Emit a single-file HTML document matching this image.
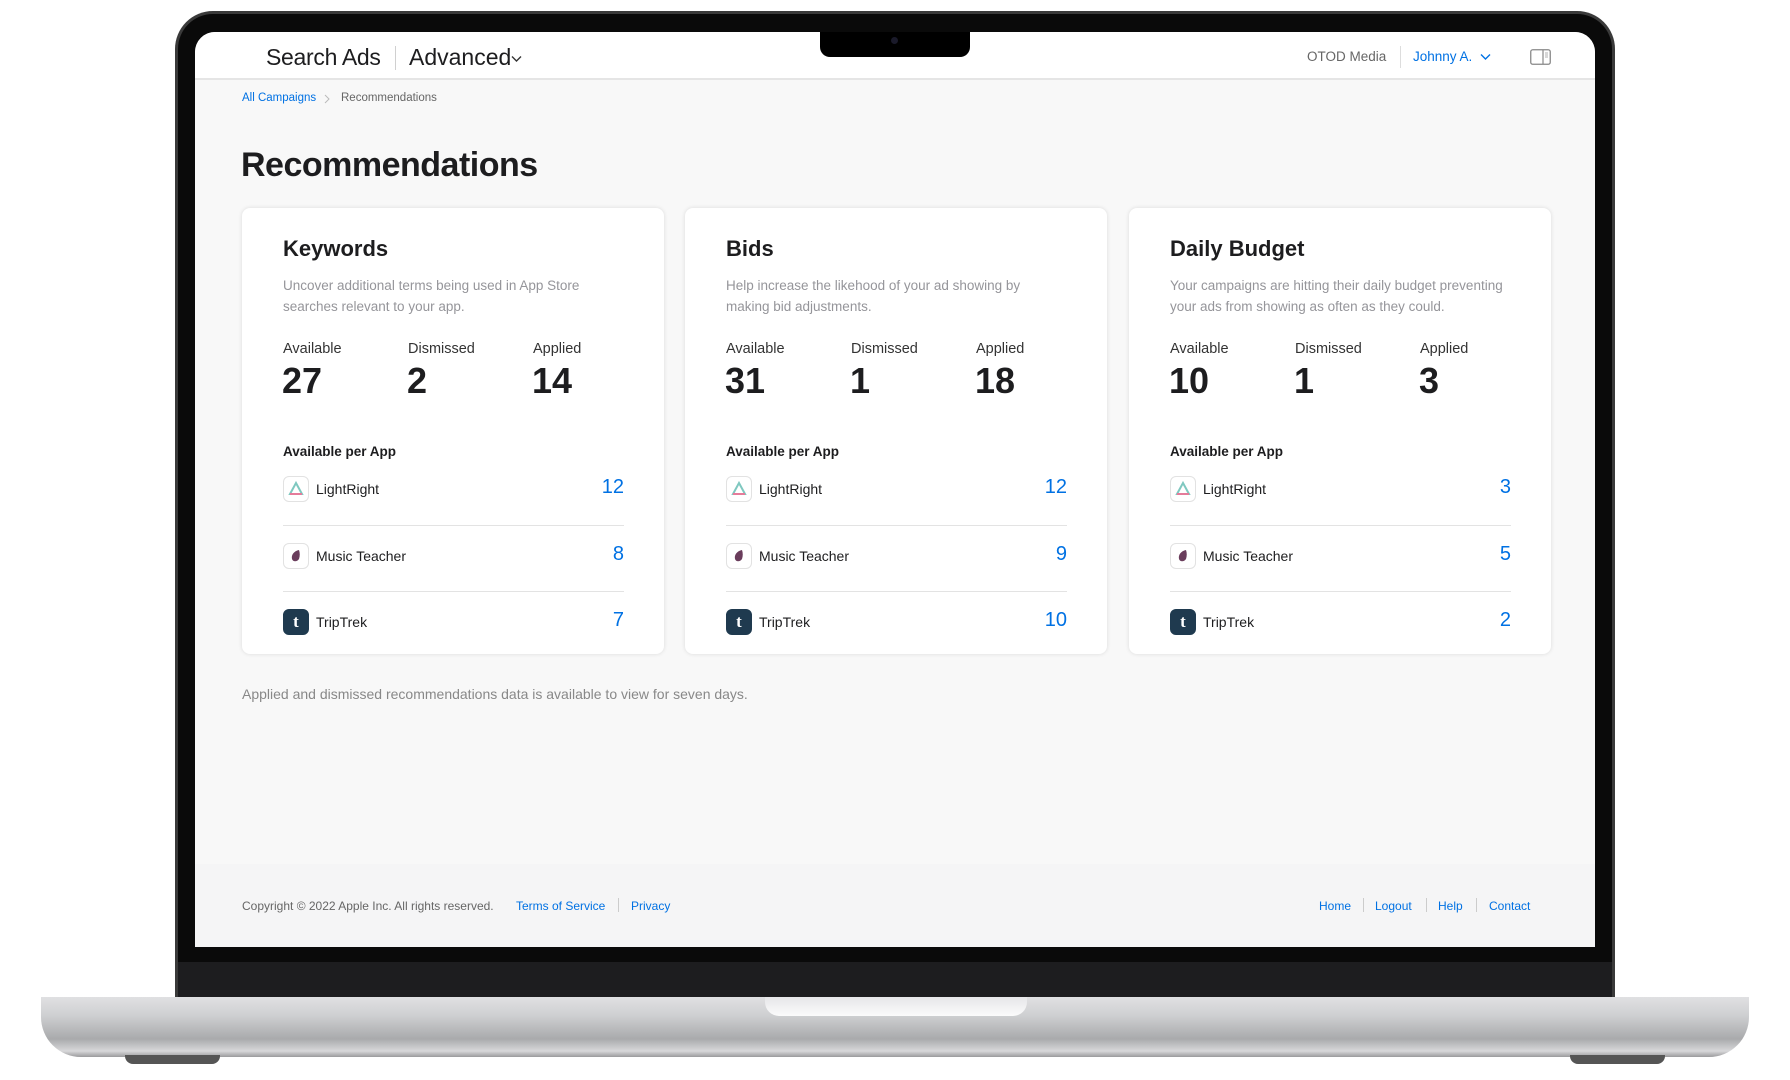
<!DOCTYPE html>
<html><head><meta charset="utf-8"><style>
*{margin:0;padding:0;box-sizing:border-box}
body{width:1790px;height:1080px;background:#fff;position:relative;overflow:hidden;font-family:"Liberation Sans",Arial,sans-serif}
.abs{position:absolute}
.lid{left:175px;top:11px;width:1440px;height:990px;background:#0a0a0a;border-radius:38px 38px 0 0;border:3px solid #3a3a3a;border-bottom:none}
.screen{left:195px;top:32px;width:1400px;height:915px;background:#f8f8f8;border-radius:20px 20px 0 0;overflow:hidden}
.chin{left:178px;top:962px;width:1434px;height:36px;background:#1d1d1f}
.base{left:41px;top:997px;width:1708px;height:60px;border-radius:0 0 40px 40px;background:linear-gradient(#e0e0e2,#cfd0d2 30%,#a9aaac 70%,#d8d8da 90%,#9a9a9c)}
.thumb{left:765px;top:997px;width:262px;height:19px;background:linear-gradient(#e6e6e8,#fbfbfb);border-radius:0 0 14px 14px}
.foot{top:1055px;width:95px;height:9px;background:#555;border-radius:0 0 8px 8px}
.notch{left:625px;top:0;width:150px;height:25px;background:#000;border-radius:0 0 10px 10px}
.hdr{left:0;top:0;width:1400px;height:48px;background:#fff;border-bottom:2px solid #e5e5e5}
.t{position:absolute;white-space:nowrap}
.card{position:absolute;top:176px;width:422px;height:446px;background:#fff;border-radius:8px;box-shadow:0 0 4px rgba(0,0,0,.12)}
.card h2{position:absolute;left:41px;top:28px;font-size:22px;font-weight:600;color:#1d1d1f}
.card .d{position:absolute;left:41px;top:67px;font-size:13.5px;line-height:21px;color:#95959a;width:340px}
.lb{position:absolute;top:133px;font-size:14.5px;color:#333}
.num{position:absolute;top:152px;font-size:36px;font-weight:600;color:#1d1d1f}
.apa{position:absolute;left:41px;top:236px;font-size:13.5px;font-weight:700;color:#1d1d1f}
.row{position:absolute;left:41px;width:341px;height:66px}
.row .ic{position:absolute;left:0;top:0;width:26px;height:26px;border-radius:6px;border:1px solid #e2e2e2;background:#fff}
.row .nm{position:absolute;left:33px;top:5px;font-size:14px;color:#1d1d1f}
.row .v{position:absolute;right:0;top:0;font-size:20px;color:#0071e3}
.sep{position:absolute;left:41px;width:341px;height:1px;background:#e3e3e3}
a{color:#0071e3;text-decoration:none}
</style></head><body>
<div class="abs lid"></div>
<div class="abs chin"></div>
<div class="abs base"></div>
<div class="abs thumb"></div>
<div class="abs foot" style="left:125px"></div>
<div class="abs foot" style="left:1570px"></div>
<div class="abs screen">
 <div class="abs hdr"></div>
 <div class="abs notch"><div class="abs" style="left:71px;top:5px;width:7px;height:7px;border-radius:50%;background:#1a1a2a"></div></div>
 <div class="t" style="left:71px;top:12px;font-size:23px;color:#1d1d1f;letter-spacing:-0.3px">Search Ads</div>
 <div class="abs" style="left:200px;top:14px;width:1px;height:24px;background:#d0d0d0"></div>
 <div class="t" style="left:214px;top:12px;font-size:23px;color:#1d1d1f;font-weight:300">Advanced</div>
 <svg class="abs" style="left:316px;top:23px" width="11" height="8"><path d="M1 1.5L5.5 6L10 1.5" stroke="#333" stroke-width="1.4" fill="none"/></svg>
 <div class="t" style="left:1112px;top:17px;font-size:13.5px;color:#666">OTOD Media</div>
 <div class="abs" style="left:1205px;top:14px;width:1px;height:22px;background:#ddd"></div>
 <div class="t" style="left:1218px;top:17px;font-size:13.5px;color:#0071e3">Johnny A.</div>
 <svg class="abs" style="left:1285px;top:21px" width="11" height="8"><path d="M1 1.5L5.5 6L10 1.5" stroke="#0071e3" stroke-width="1.4" fill="none"/></svg>
 <svg class="abs" style="left:1335px;top:17px" width="21" height="16"><rect x=".75" y=".75" width="19.5" height="14.5" rx="2" stroke="#888" stroke-width="1.3" fill="none"/><path d="M13 1v14" stroke="#888" stroke-width="1.2"/><path d="M15 4h3M15 6h3M15 8h3" stroke="#999" stroke-width=".8"/></svg>
 <div class="t" style="left:47px;top:60px;font-size:11.5px"><a>All Campaigns</a></div>
 <svg class="abs" style="left:129px;top:62px" width="6" height="10"><path d="M1 1l4 4-4 4" stroke="#bbb" fill="none"/></svg>
 <div class="t" style="left:146px;top:60px;font-size:11.5px;color:#666">Recommendations</div>
 <div class="t" style="left:46px;top:114px;font-size:34px;font-weight:600;color:#1d1d1f;letter-spacing:-0.5px">Recommendations</div>

 <div class="card" style="left:47px">
  <h2>Keywords</h2>
  <div class="d">Uncover additional terms being used in App Store searches relevant to your app.</div>
  <div class="lb" style="left:41px">Available</div><div class="lb" style="left:166px">Dismissed</div><div class="lb" style="left:291px">Applied</div>
  <div class="num" style="left:40px">27</div><div class="num" style="left:165px">2</div><div class="num" style="left:290px">14</div>
  <div class="apa">Available per App</div>
  <div class="row" style="top:268px"><div class="ic"><svg width="24" height="24"><path d="M12 6L18 17H6Z" fill="none" stroke="#7fc8c0" stroke-width="2"/><path d="M6 17H18" stroke="#e57b9a" stroke-width="2"/></svg></div><div class="nm">LightRight</div><div class="v">12</div></div>
  <div class="sep" style="top:317px"></div>
  <div class="row" style="top:335px"><div class="ic"><svg width="24" height="24"><path d="M15 6C10 7 7 11 8 15c1 3 5 3 7 0 1-3 1-6 0-9Z" fill="#6a3d5c"/></svg></div><div class="nm">Music Teacher</div><div class="v">8</div></div>
  <div class="sep" style="top:383px"></div>
  <div class="row" style="top:401px"><div class="ic" style="background:#1f3a4f;border-color:#1f3a4f"><div style="color:#fff;font:700 17px 'Liberation Serif',serif;text-align:center;line-height:24px">t</div></div><div class="nm">TripTrek</div><div class="v">7</div></div>
 </div>
 <div class="card" style="left:490px">
  <h2>Bids</h2>
  <div class="d">Help increase the likehood of your ad showing by making bid adjustments.</div>
  <div class="lb" style="left:41px">Available</div><div class="lb" style="left:166px">Dismissed</div><div class="lb" style="left:291px">Applied</div>
  <div class="num" style="left:40px">31</div><div class="num" style="left:165px">1</div><div class="num" style="left:290px">18</div>
  <div class="apa">Available per App</div>
  <div class="row" style="top:268px"><div class="ic"><svg width="24" height="24"><path d="M12 6L18 17H6Z" fill="none" stroke="#7fc8c0" stroke-width="2"/><path d="M6 17H18" stroke="#e57b9a" stroke-width="2"/></svg></div><div class="nm">LightRight</div><div class="v">12</div></div>
  <div class="sep" style="top:317px"></div>
  <div class="row" style="top:335px"><div class="ic"><svg width="24" height="24"><path d="M15 6C10 7 7 11 8 15c1 3 5 3 7 0 1-3 1-6 0-9Z" fill="#6a3d5c"/></svg></div><div class="nm">Music Teacher</div><div class="v">9</div></div>
  <div class="sep" style="top:383px"></div>
  <div class="row" style="top:401px"><div class="ic" style="background:#1f3a4f;border-color:#1f3a4f"><div style="color:#fff;font:700 17px 'Liberation Serif',serif;text-align:center;line-height:24px">t</div></div><div class="nm">TripTrek</div><div class="v">10</div></div>
 </div>
 <div class="card" style="left:934px">
  <h2>Daily Budget</h2>
  <div class="d">Your campaigns are hitting their daily budget preventing your ads from showing as often as they could.</div>
  <div class="lb" style="left:41px">Available</div><div class="lb" style="left:166px">Dismissed</div><div class="lb" style="left:291px">Applied</div>
  <div class="num" style="left:40px">10</div><div class="num" style="left:165px">1</div><div class="num" style="left:290px">3</div>
  <div class="apa">Available per App</div>
  <div class="row" style="top:268px"><div class="ic"><svg width="24" height="24"><path d="M12 6L18 17H6Z" fill="none" stroke="#7fc8c0" stroke-width="2"/><path d="M6 17H18" stroke="#e57b9a" stroke-width="2"/></svg></div><div class="nm">LightRight</div><div class="v">3</div></div>
  <div class="sep" style="top:317px"></div>
  <div class="row" style="top:335px"><div class="ic"><svg width="24" height="24"><path d="M15 6C10 7 7 11 8 15c1 3 5 3 7 0 1-3 1-6 0-9Z" fill="#6a3d5c"/></svg></div><div class="nm">Music Teacher</div><div class="v">5</div></div>
  <div class="sep" style="top:383px"></div>
  <div class="row" style="top:401px"><div class="ic" style="background:#1f3a4f;border-color:#1f3a4f"><div style="color:#fff;font:700 17px 'Liberation Serif',serif;text-align:center;line-height:24px">t</div></div><div class="nm">TripTrek</div><div class="v">2</div></div>
 </div>
 <div class="t" style="left:47px;top:654px;font-size:14px;color:#888">Applied and dismissed recommendations data is available to view for seven days.</div>

 <div class="abs" style="left:0;top:832px;width:1400px;height:83px;background:#f5f5f6"></div>
 <div class="t" style="left:47px;top:867px;font-size:12px;color:#666">Copyright © 2022 Apple Inc. All rights reserved.</div>
 <div class="t" style="left:321px;top:867px;font-size:12px"><a>Terms of Service</a></div>
 <div class="abs" style="left:423px;top:866px;width:1px;height:14px;background:#ccc"></div>
 <div class="t" style="left:436px;top:867px;font-size:12px"><a>Privacy</a></div>
 <div class="t" style="left:1124px;top:867px;font-size:12px"><a>Home</a></div>
 <div class="abs" style="left:1168px;top:866px;width:1px;height:14px;background:#ccc"></div>
 <div class="t" style="left:1180px;top:867px;font-size:12px"><a>Logout</a></div>
 <div class="abs" style="left:1231px;top:866px;width:1px;height:14px;background:#ccc"></div>
 <div class="t" style="left:1243px;top:867px;font-size:12px"><a>Help</a></div>
 <div class="abs" style="left:1281px;top:866px;width:1px;height:14px;background:#ccc"></div>
 <div class="t" style="left:1294px;top:867px;font-size:12px"><a>Contact</a></div>
</div>
</body></html>
